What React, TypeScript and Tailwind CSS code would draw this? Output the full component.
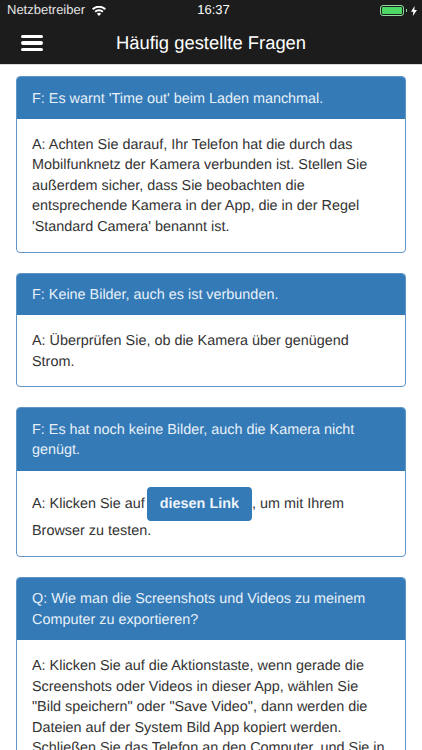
function Panel({ title, children }: { title: string; children: React.ReactNode }) {
  return (
    <div className="mb-5 overflow-hidden rounded-[4px] border border-[#5f96c6] bg-white">
      <div className="bg-[#337ab7] px-[15px] pt-[11.5px] pb-[9.5px] text-[#e8f0f7]">{title}</div>
      <div className="px-[15px] pt-[16px] pb-[14px] text-[#333]">{children}</div>
    </div>
  )
}

function App() {
  return (
    <div className="h-[750px] w-[422px] overflow-hidden bg-white font-['Liberation_Sans',Arial,sans-serif] text-[14.4px] leading-[20.6px] [text-rendering:geometricPrecision]">
      <header className="h-[65px] border-b border-[#d8d8d8] bg-[#1c1c1c] text-white">
        <div className="flex h-[20px] items-center justify-between pt-[1px] pl-[7px] pr-[5px] text-[13px]">
          <div className="flex flex-1 items-center gap-[7px]">
            <span className="text-[#e4e4e4]">Netzbetreiber</span>
            <svg width="14" height="10" viewBox="0 0 14 10" fill="white">
              <path d="M7 10 4.9 7.7a3 3 0 0 1 4.2 0zM3.8 6.5 2.5 5.1a6.4 6.4 0 0 1 9 0l-1.3 1.4a4.5 4.5 0 0 0-6.4 0zM1.4 4 0 2.6a10 10 0 0 1 14 0L12.6 4a8 8 0 0 0-11.2 0z" />
            </svg>
          </div>
          <span className="ml-[3px] font-medium">16:37</span>
          <div className="flex flex-1 items-center justify-end gap-[2px]">
            <div className="flex h-[11px] w-[24px] rounded-[3px] border border-[#8fdc9c] p-[1px]">
              <div className="w-full rounded-[1px] bg-[#4cd964]" />
            </div>
            <div className="h-[3px] w-[1px] bg-[#8fdc9c]" />
            <svg width="6" height="10" viewBox="0 0 6 10" fill="white" className="ml-[2px]">
              <path d="M3.6 0 0 5.7h2.3L1.8 10 6 3.9H3.4z" />
            </svg>
          </div>
        </div>
        <div className="relative flex h-[44px] items-center justify-center pt-[2px]">
          <button className="absolute left-[21px] flex w-[22px] flex-col gap-[3px]">
            <span className="h-[3.5px] rounded-full bg-white" />
            <span className="h-[3.5px] rounded-full bg-white" />
            <span className="h-[3.5px] rounded-full bg-white" />
          </button>
          <h1 className="text-[18.4px] font-medium">Häufig gestellte Fragen</h1>
        </div>
      </header>
      <main className="px-[16px] pt-[11px]">
        <Panel title="F: Es warnt 'Time out' beim Laden manchmal.">
          A: Achten Sie darauf, Ihr Telefon hat die durch das Mobilfunknetz der Kamera verbunden ist. Stellen Sie außerdem sicher, dass Sie beobachten die entsprechende Kamera in der App, die in der Regel 'Standard Camera' benannt ist.
        </Panel>
        <Panel title="F: Keine Bilder, auch es ist verbunden.">
          A: Überprüfen Sie, ob die Kamera über genügend Strom.
        </Panel>
        <Panel title="F: Es hat noch keine Bilder, auch die Kamera nicht genügt.">
          A: Klicken Sie auf{' '}
          <a className="-ml-[2px] inline-block rounded-[4px] bg-[#337ab7] px-[13px] py-[7px] align-middle font-bold text-[#eef4f9]">
            diesen Link
          </a>
          , um mit Ihrem Browser zu testen.
        </Panel>
        <Panel title="Q: Wie man die Screenshots und Videos zu meinem Computer zu exportieren?">
          A: Klicken Sie auf die Aktionstaste, wenn gerade die Screenshots oder Videos in dieser App, wählen Sie "Bild speichern" oder "Save Video", dann werden die Dateien auf der System Bild App kopiert werden. Schließen Sie das Telefon an den Computer, und Sie in der Lage sein sollten, sie zu exportieren.
        </Panel>
      </main>
    </div>
  )
}

export default App
